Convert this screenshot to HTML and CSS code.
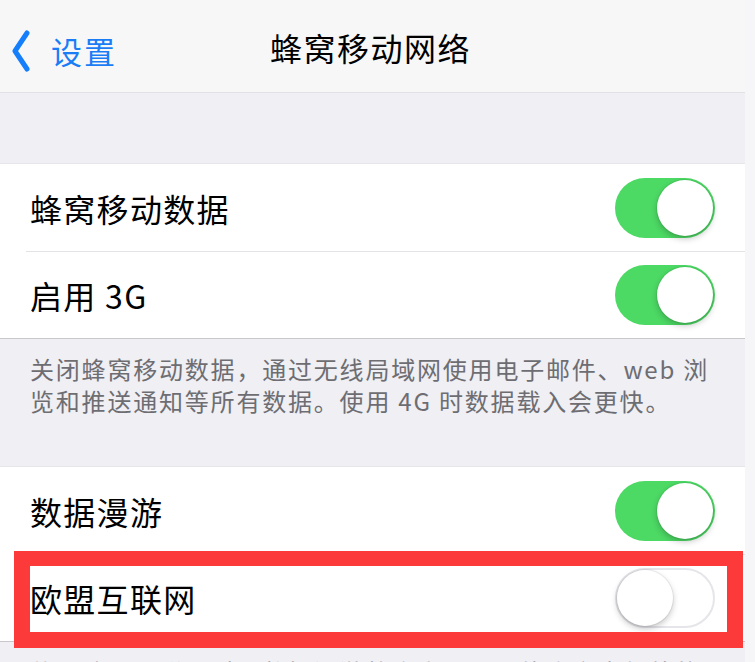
FILE: index.html
```html
<!DOCTYPE html>
<html lang="zh">
<head>
<meta charset="utf-8">
<link rel="stylesheet" href="styles.css">
</head>
<body>
<div class="screen">
  <header class="nav">
    <div class="back">
      <svg class="chev" width="22" height="42" viewBox="0 0 22 42"><path d="M17 3 L5 21 L17 39" fill="none" stroke="#157efb" stroke-width="5" stroke-linecap="round" stroke-linejoin="round"/></svg>
      <span class="back-text">设置</span>
    </div>
    <div class="title">蜂窝移动网络</div>
  </header>
  <div class="spacer"></div>
  <section class="group">
    <div class="row"><span class="label">蜂窝移动数据</span><span class="toggle on"><span class="knob"></span></span></div>
    <div class="row sep"><span class="label">启用 3G</span><span class="toggle on"><span class="knob"></span></span></div>
  </section>
  <div class="footer">关闭蜂窝移动数据，通过无线局域网使用电子邮件、web 浏览和推送通知等所有数据。使用 4G 时数据载入会更快。</div>
  <section class="group">
    <div class="row"><span class="label">数据漫游</span><span class="toggle on"><span class="knob"></span></span></div>
    <div class="row sep highlight"><span class="label">欧盟互联网</span><span class="toggle off"><span class="knob"></span></span></div>
  </section>
  <div class="footer">使用欧盟互联网时，数据漫游将会启用，可能会产生额外的费用。</div>
</div>
</body>
</html>
```
FILE: styles.css
```css
html, body {
  margin: 0;
  padding: 0;
}
body {
  background: #f6f6f8;
  font-family: "Noto Sans CJK SC", "Noto Sans", sans-serif;
  overflow: hidden;
}
.screen {
  width: 745px;
  background: #efeff4;
}
.nav {
  height: 93px;
  background: #f7f7f8;
  border-bottom: 1px solid #e2e2e6;
  box-sizing: border-box;
  position: relative;
  display: flex;
  align-items: center;
  justify-content: center;
}
.back {
  position: absolute;
  left: 10px;
  top: 30px;
  display: flex;
  align-items: center;
  gap: 19px;
}
.back-text {
  color: #1a7df5;
  font-size: 31px;
  line-height: 40px;
  letter-spacing: 2px;
}
.title {
  font-size: 32px;
  color: #000;
  letter-spacing: 1.5px;
  line-height: 40px;
  margin-top: 2px;
  margin-left: -4px;
}
.spacer {
  height: 70px;
}
.group {
  background: #fff;
  border-top: 1px solid #e6e6ea;
  border-bottom: 1px solid #c8c7cc;
}
.row {
  height: 87px;
  box-sizing: border-box;
  display: flex;
  align-items: center;
  justify-content: space-between;
  padding: 0 30px 0 30px;
  position: relative;
}
.row.sep::before {
  content: "";
  position: absolute;
  left: 26px;
  right: 0;
  top: 0;
  border-top: 1px solid #e3e3e6;
}
.label {
  font-size: 32px;
  color: #000;
  letter-spacing: 1.3px;
}
.toggle {
  width: 100px;
  height: 60px;
  border-radius: 30px;
  box-sizing: border-box;
  position: relative;
  display: block;
}
.toggle.on {
  background: #4cd964;
}
.toggle.off {
  background: #fff;
  border: 2px solid #e5e5ea;
}
.knob {
  position: absolute;
  width: 56px;
  height: 56px;
  border-radius: 50%;
  background: #fff;
  box-shadow: 0 3px 6px rgba(0,0,0,0.22), 0 0 0 1px rgba(0,0,0,0.06);
}
.toggle.on .knob {
  right: 2px;
  top: 2px;
}
.toggle.off .knob {
  left: 0;
  top: 0;
}
.highlight::after {
  content: "";
  position: absolute;
  left: 14px;
  right: 2px;
  top: -3px;
  bottom: -7px;
  border: 16px solid #fc3a3a;
  border-top-width: 15px;
}
.footer {
  padding: 14px 30px 49px 30px;
  font-size: 24px;
  line-height: 32px;
  letter-spacing: 1.8px;
  color: #6d6d72;
}
```
